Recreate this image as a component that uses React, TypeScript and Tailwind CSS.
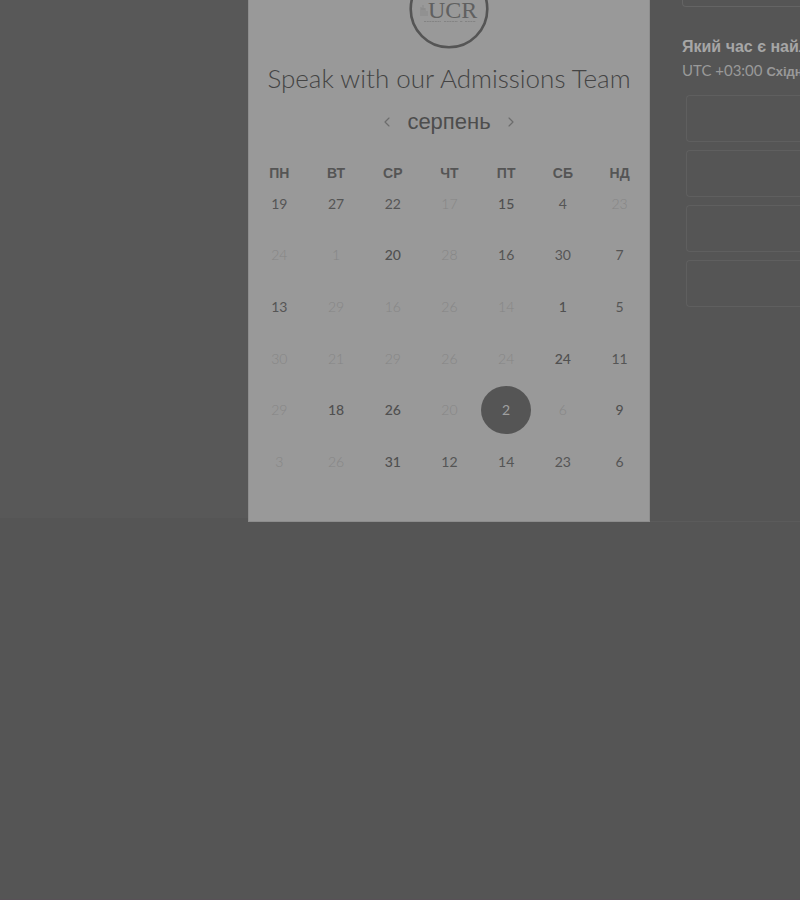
import { ChevronLeft, ChevronRight } from "lucide-react";

type Tone = "off" | "on" | "strong" | "selected";
type Day = [number, Tone];

const weekdays = ["ПН", "ВТ", "СР", "ЧТ", "ПТ", "СБ", "НД"];

const weeks: Day[][] = [
  [[19, "on"], [27, "on"], [22, "on"], [17, "off"], [15, "strong"], [4, "on"], [23, "off"]],
  [[24, "off"], [1, "off"], [20, "strong"], [28, "off"], [16, "on"], [30, "on"], [7, "on"]],
  [[13, "on"], [29, "off"], [16, "off"], [26, "off"], [14, "off"], [1, "strong"], [5, "on"]],
  [[30, "off"], [21, "off"], [29, "off"], [26, "off"], [24, "off"], [24, "strong"], [11, "on"]],
  [[29, "off"], [18, "strong"], [26, "strong"], [20, "off"], [2, "selected"], [6, "off"], [9, "strong"]],
  [[3, "off"], [26, "off"], [31, "strong"], [12, "on"], [14, "on"], [23, "on"], [6, "on"]],
];

const tones: Record<Tone, string> = {
  off: "text-[#868686] font-light",
  on: "text-[#555555]",
  strong: "text-[#505050] font-medium",
  selected: "bg-[#555555] text-[#a0a0a0]",
};

function Logo() {
  return (
    <svg viewBox="0 0 80 80" className="h-20 w-20" role="img" aria-label="UCR">
      <circle cx="40" cy="40" r="38.3" fill="none" stroke="#555555" strokeWidth="2.6" />
      <path d="M12 38v9M14 36v11M16 39v8M18 42v5M12 40h4" stroke="#868686" strokeWidth="0.8" fill="none" />
      <text x="19" y="49" fontSize="24" fill="#606060" fontFamily="Liberation Serif, serif">UCR</text>
      <path d="M15 52.5h17M35 52.5h14M51 52.5h3M56 52.5h11" stroke="#838383" strokeWidth="1.2" strokeDasharray="2 0.7" />
    </svg>
  );
}

function Calendar() {
  return (
    <section className="flex h-[522px] flex-col items-center border border-t-0 border-[#8d8d8d] bg-[#999999]">
      <div className="-mt-[31px] h-20">
        <Logo />
      </div>
      <h1 className="mt-[11px] text-[26px] leading-9 font-light whitespace-nowrap text-[#444444]">Speak with our Admissions Team</h1>
      <div className="mt-2 flex h-9 items-center gap-3">
        <button type="button" aria-label="Попередній місяць" className="text-[#6c6c6c]">
          <ChevronLeft size={16} strokeWidth={1.75} />
        </button>
        <h2 className="font-['Liberation_Sans',sans-serif] text-[22px] leading-7 text-[#4d4d4d]">серпень</h2>
        <button type="button" aria-label="Наступний місяць" className="text-[#6c6c6c]">
          <ChevronRight size={16} strokeWidth={1.75} />
        </button>
      </div>
      <div className="mt-7 w-full pr-px pl-0.5">
        <table className="h-80 w-full table-fixed border-collapse">
          <thead>
            <tr>
              {weekdays.map((name) => (
                <th key={name} scope="col" className="h-2.5 p-0 font-['Liberation_Sans',sans-serif] text-sm leading-[10px] font-bold text-[#555555]">
                  {name}
                </th>
              ))}
            </tr>
          </thead>
          <tbody>
            {weeks.map((week, row) => (
              <tr key={row}>
                {week.map(([day, tone], column) => (
                  <td key={column} className="p-0 text-center align-middle">
                    <button
                      type="button"
                      disabled={tone === "off"}
                      className={`h-12 w-[50px] rounded-[50%] text-[14px] leading-5 ${tones[tone]}`}
                    >
                      {day}
                    </button>
                  </td>
                ))}
              </tr>
            ))}
          </tbody>
        </table>
      </div>
    </section>
  );
}

function Times() {
  return (
    <section className="h-[522px] min-w-0 overflow-hidden border-b border-[#5b5b5b] pl-8 whitespace-nowrap">
      <select aria-label="Тривалість" className="block h-[7px] w-full appearance-none rounded-bl-sm border-b border-l border-[#646464] bg-transparent" />
      <h2 className="mt-7 font-['Liberation_Sans',sans-serif] text-[16px] leading-6 font-bold text-[#a6a6a6]">
        Який час є найліпшим?
      </h2>
      <p className="text-[15px] leading-[23px] text-[#999999]">
        UTC +03:00{" "}
        <span className="font-['Liberation_Sans',sans-serif] text-[13px] font-bold">Східноєвропейський час</span>
      </p>
      <div className="mt-3 flex flex-col gap-2 pl-1">
        {[1, 2, 3, 4].map((slot) => (
          <button
            key={slot}
            type="button"
            aria-label={`Час ${slot}`}
            className="h-[47px] w-full rounded-l-sm border border-r-0 border-[#5f5f5f]"
          />
        ))}
      </div>
    </section>
  );
}

export default function App() {
  return (
    <main className="min-h-screen overflow-hidden border-b border-[#585157] bg-[#555555] font-['Lato',sans-serif]">
      <div className="grid grid-cols-[31%_402px_minmax(0,1fr)]">
        <div className="h-[518px] bg-[#585858]" />
        <Calendar />
        <Times />
      </div>
    </main>
  );
}
